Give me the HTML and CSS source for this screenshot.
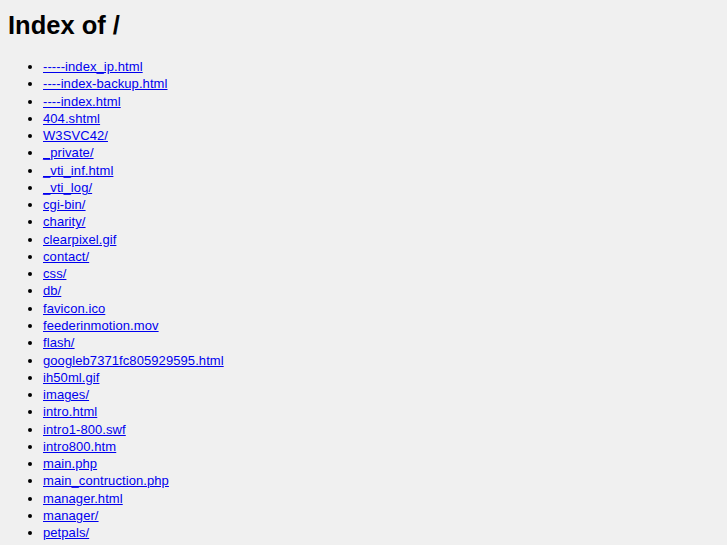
FILE: index.html
```html
<!DOCTYPE html>
<html>
<head>
<meta charset="utf-8">
<title>Index of /</title>
<link rel="stylesheet" href="styles.css">
</head>
<body>
<h1 class="title">Index of /</h1>
<ul class="listing">
<li><a href="#">-----index_ip.html</a></li>
<li><a href="#">----index-backup.html</a></li>
<li><a href="#">----index.html</a></li>
<li><a href="#">404.shtml</a></li>
<li><a href="#">W3SVC42/</a></li>
<li><a href="#">_private/</a></li>
<li><a href="#">_vti_inf.html</a></li>
<li><a href="#">_vti_log/</a></li>
<li><a href="#">cgi-bin/</a></li>
<li><a href="#">charity/</a></li>
<li><a href="#">clearpixel.gif</a></li>
<li><a href="#">contact/</a></li>
<li><a href="#">css/</a></li>
<li><a href="#">db/</a></li>
<li><a href="#">favicon.ico</a></li>
<li><a href="#">feederinmotion.mov</a></li>
<li><a href="#">flash/</a></li>
<li><a href="#">googleb7371fc805929595.html</a></li>
<li><a href="#">ih50ml.gif</a></li>
<li><a href="#">images/</a></li>
<li><a href="#">intro.html</a></li>
<li><a href="#">intro1-800.swf</a></li>
<li><a href="#">intro800.htm</a></li>
<li><a href="#">main.php</a></li>
<li><a href="#">main_contruction.php</a></li>
<li><a href="#">manager.html</a></li>
<li><a href="#">manager/</a></li>
<li><a href="#">petpals/</a></li>
</ul>
</body>
</html>
```
FILE: styles.css
```css
html {
  background: #f0f0f0;
}
body {
  margin: 8px;
  font-family: "Liberation Sans", Arial, sans-serif;
  font-size: 13px;
  color: #000;
  background: #f0f0f0;
}
.title {
  font-size: 25.5px;
  font-weight: bold;
  line-height: 30px;
  margin: 2px 0 18px;
}
.listing {
  margin: 0;
  padding-left: 35px;
  line-height: 17.26px;
  letter-spacing: 0.08px;
}
.listing a {
  color: #0000ee;
  text-decoration: underline;
}
```
